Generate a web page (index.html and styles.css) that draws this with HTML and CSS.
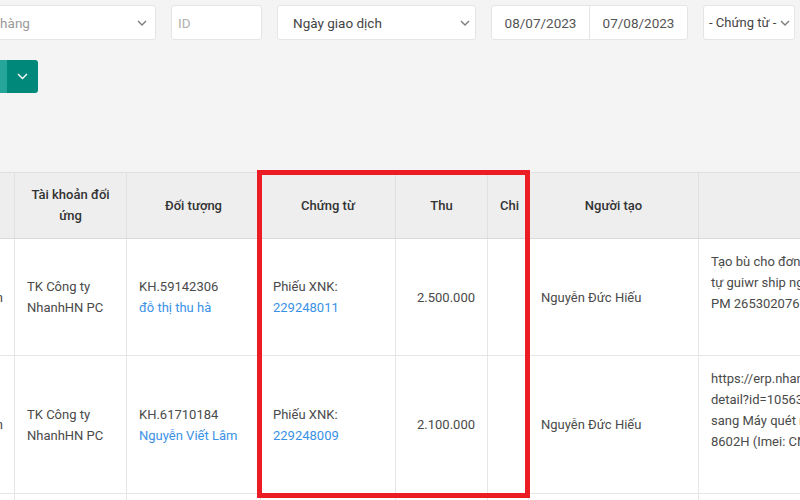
FILE: index.html
```html
<!DOCTYPE html>
<html lang="vi">
<head>
<meta charset="utf-8">
<title>Sổ quỹ</title>
<link rel="stylesheet" href="styles.css">
</head>
<body>
<div class="page">
  <div class="filters">
    <div class="field select w-customer">
      <span class="placeholder">Khách hàng</span>
      <svg class="chev" width="10" height="6" viewBox="0 0 10 6"><path d="M1 1l4 4 4-4"/></svg>
    </div>
    <div class="field w-id"><span class="placeholder">ID</span></div>
    <div class="field select w-datetype">
      <span>Ngày giao dịch</span>
      <svg class="chev" width="10" height="6" viewBox="0 0 10 6"><path d="M1 1l4 4 4-4"/></svg>
    </div>
    <div class="field daterange">
      <span class="half">08/07/2023</span>
      <span class="half">07/08/2023</span>
    </div>
    <div class="field select w-doc">
      <span>- Chứng từ -</span>
      <svg class="chev" width="10" height="6" viewBox="0 0 10 6"><path d="M1 1l4 4 4-4"/></svg>
    </div>
  </div>

  <div class="actions">
    <div class="btn-group">
      <button class="btn-main">Lọc</button>
      <button class="btn-caret"><svg width="11" height="7" viewBox="0 0 11 7"><path d="M1 1l4.5 4.5L10 1"/></svg></button>
    </div>
  </div>

  <table class="grid">
    <colgroup>
      <col class="c-type"><col class="c-acc"><col class="c-obj"><col class="c-doc"><col class="c-in"><col class="c-out"><col class="c-user"><col class="c-note">
    </colgroup>
    <thead>
      <tr>
        <th>Loại</th>
        <th>Tài khoản đối ứng</th>
        <th>Đối tượng</th>
        <th>Chứng từ</th>
        <th>Thu</th>
        <th>Chi</th>
        <th>Người tạo</th>
        <th>Nội dung</th>
      </tr>
    </thead>
    <tbody>
      <tr>
        <td class="type">Thu tiền</td>
        <td>TK Công ty NhanhHN PC</td>
        <td>KH.59142306<br><a class="link" href="#">đỗ thị thu hà</a></td>
        <td>Phiếu XNK:<br><a class="link" href="#">229248011</a></td>
        <td class="num">2.500.000</td>
        <td class="num"></td>
        <td>Nguyễn Đức Hiếu</td>
        <td class="note">Tạo bù cho đơn hàng 265302076 do khách<br>tự guiwr ship nguyên giá, xem đơn<br>PM 2653020765</td>
      </tr>
      <tr>
        <td class="type">Thu tiền</td>
        <td>TK Công ty NhanhHN PC</td>
        <td>KH.61710184<br><a class="link" href="#">Nguyễn Viết Lâm</a></td>
        <td>Phiếu XNK:<br><a class="link" href="#">229248009</a></td>
        <td class="num">2.100.000</td>
        <td class="num"></td>
        <td>Nguyễn Đức Hiếu</td>
        <td class="note">https://erp.nhanh.vn/inventory/bill/<br>detail?id=1056321 đổi máy<br>sang Máy quét mã vạch Honeywell HH<br>8602H (Imei: CN2314)</td>
      </tr>
      <tr>
        <td class="type">Thu tiền</td>
        <td>TK Công ty NhanhHN PC</td>
        <td>KH.61709932<br><a class="link" href="#">Trần Văn Nam</a></td>
        <td>Phiếu XNK:<br><a class="link" href="#">229248002</a></td>
        <td class="num">1.850.000</td>
        <td class="num"></td>
        <td>Nguyễn Đức Hiếu</td>
        <td class="note">Thu tiền đơn hàng 265301988<br>khách chuyển khoản<br>&nbsp;<br>&nbsp;</td>
      </tr>
    </tbody>
  </table>
</div>
<div class="highlight"></div>
</body>
</html>
```

FILE: styles.css
```css
* { box-sizing: border-box; }

html, body { height: 500px; }

body {
  margin: 0;
  background: #f4f4f4;
  font-family: Roboto, "Noto Sans", "Liberation Sans", sans-serif;
  color: #4a4a4a;
  overflow: hidden;
}

.page {
  margin-left: -60px;
  width: 1160px;
  padding-top: 5px;
}

/* filter bar */
.filters {
  display: flex;
  gap: 15px;
  height: 35px;
}

.field {
  height: 35px;
  background: #fff;
  border: 1px solid #e5e5e5;
  border-radius: 3px;
  display: flex;
  align-items: center;
  font-size: 13.5px;
  color: #444;
  white-space: nowrap;
}

.select {
  justify-content: space-between;
  padding: 0 5px 0 15px;
}

.placeholder { color: #9a9a9a; }

.chev { flex: none; }
.chev path { fill: none; stroke: #7a7a7a; stroke-width: 1.3; }

.w-customer { width: 216px; padding-left: 18px; padding-right: 8px; }
.w-id { width: 91px; padding-left: 6px; }
.w-id .placeholder { color: #b0b0b0; }
.w-datetype { width: 199px; }
.w-doc { width: 92px; padding-left: 5px; padding-right: 4px; }
.w-doc span { font-size: 13px; }

.daterange {
  width: 197px;
  padding: 0;
}
.daterange .half {
  flex: 1;
  height: 100%;
  display: flex;
  align-items: center;
  justify-content: center;
  color: #555;
}
.daterange .half + .half { border-left: 1px solid #e5e5e5; }

/* action buttons */
.actions {
  margin-top: 20px;
  height: 33px;
}

.btn-group { display: flex; height: 33px; }

.btn-main {
  width: 67px;
  border: 0;
  background: #26a69a;
  color: #fff;
  font: inherit;
  font-size: 14px;
  border-radius: 3px 0 0 3px;
}

.btn-caret {
  width: 31px;
  border: 0;
  background: #00897b;
  border-radius: 0 3px 3px 0;
  display: flex;
  align-items: center;
  justify-content: center;
  padding: 0;
}
.btn-caret path { fill: none; stroke: #fff; stroke-width: 1.4; }

/* table */
.grid {
  margin-top: 79px;
  border-collapse: collapse;
  table-layout: fixed;
  width: 1058px;
  font-size: 13px;
  line-height: 21px;
}

.c-type { width: 74px; }
.c-acc { width: 112px; }
.c-obj { width: 134px; }
.c-doc { width: 135px; }
.c-in { width: 92px; }
.c-out { width: 41px; }
.c-user { width: 170px; }
.c-note { width: 300px; }

.grid th {
  background: #eeeeee;
  color: #333;
  font-weight: 500;
  padding: 11px 12px 12px;
  border: 1px solid #e0e0e0;
  border-bottom-color: #dadada;
  text-align: center;
  vertical-align: middle;
}

.grid td {
  background: #fff;
  padding: 12px;
  border: 1px solid #e6e6e6;
  vertical-align: middle;
}

.grid td.type { text-align: right; padding-right: 11px; white-space: nowrap; }
.grid td.num { text-align: right; }
.grid td.note {
  vertical-align: top;
  padding-bottom: 41px;
  white-space: nowrap;
  overflow: hidden;
}

.link { color: #3a92e6; text-decoration: none; }

/* annotation overlay */
.highlight {
  position: absolute;
  left: 257px;
  top: 170px;
  width: 273px;
  height: 328px;
  border: 5px solid #ec1c24;
  pointer-events: none;
}
```
